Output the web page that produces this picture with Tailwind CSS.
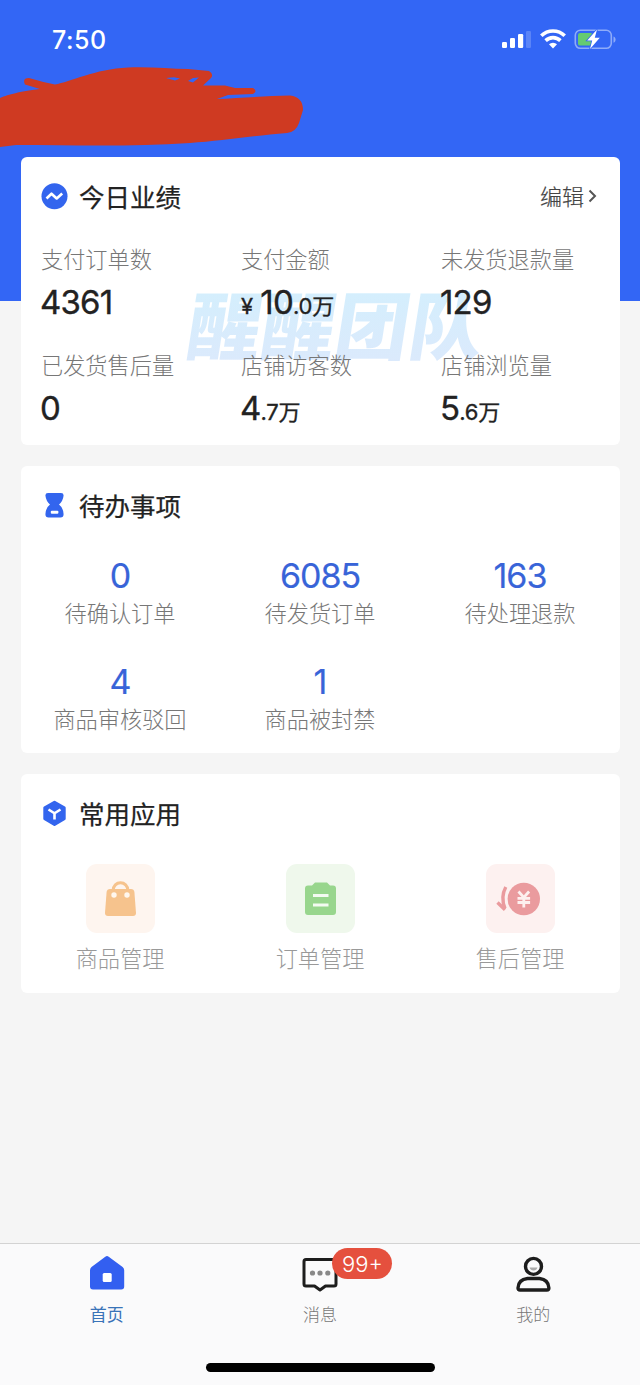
<!DOCTYPE html>
<html lang="zh-CN">
<head>
<meta charset="utf-8">
<title>店铺首页</title>
<script src="https://cdn.jsdelivr.net/npm/@tailwindcss/browser@4"></script>
</head>
<body class="w-[640px] h-[1385px] overflow-hidden font-['Inter','Noto_Sans_CJK_SC',sans-serif]">
<div class="flex flex-col h-[1385px] bg-[linear-gradient(#3366f5_301px,#f5f5f5_301px)]">

  <header class="h-[157px] shrink-0 relative">
    <div class="flex items-center justify-between pl-[52px] pr-[23px] pt-[22px]">
      <span class="text-[25px] leading-[36px] font-medium tracking-[0.5px] text-white">7:50</span>
      <div class="flex items-center">
        <svg class="w-[116px] h-[24px]" viewBox="501 28 116 24">
          <g fill="#fff"><rect x="502" y="42" width="5" height="6" rx="1.2"/><rect x="510" y="38" width="5" height="10" rx="1.2"/><rect x="518" y="34" width="5.2" height="14" rx="1.2"/><rect x="526" y="31" width="5" height="17" rx="1.2" opacity=".2"/></g>
          <g fill="none" stroke="#fff" stroke-width="3.6"><path d="M541.3 35.8a16.6 16.6 0 0 1 23.4 0"/><path d="M545.6 40.6a10.6 10.6 0 0 1 14.8 0"/></g>
          <path d="M549 44.300a5.700 5.700 0 0 1 8 0l-4 4.300z" fill="#fff"/>
          <rect x="575.3" y="30.300" width="36" height="18" rx="5" fill="none" stroke="#8eabf9" stroke-width="1.600"/>
          <path d="M613.500 36.500c2.800 1 2.800 5.200 0 6.200z" fill="#8eabf9"/>
          <rect x="578" y="33" width="14.500" height="12.600" rx="2.200" fill="#65cb70"/>
          <path d="M597 29.500l-9.800 11h5L590 49l9.800-11.200h-5z" fill="#fff" stroke="#3366f5" stroke-width="1.600" paint-order="stroke"/>
        </svg>
      </div>
    </div>
    <svg class="absolute left-0 top-[60px] w-[320px] h-[92px]" viewBox="0 60 320 92">
      <path d="M0 98C10 94 18 92 40 89L25 84.500Q22 78 29 78Q42 82 55 84.500C70 82 95 69 128 67.500C150 66.500 170 69 188 69L209 71Q214 74 211 78L203 85.500L225 85.500L235 88L253 88Q258 91 253 94L228 95L217 99C240 98 266 96 290 95.500Q303 97 303 110L299 123Q296 132 287 133C250 136 220 141 190 143C130 147 70 145 16 145L0 147Z" fill="#cf3a22"/>
      <path d="M166 78l8-.8 6 1.300-5 2zM188 81l5-3 6-.5-6 5z" fill="#3366f5"/>
    </svg>
  </header>

  <main class="flex flex-col gap-[21px] pl-[21px] pr-[20px]">
    <section class="relative isolate h-[288px] rounded-[6px] bg-white px-5 pt-[20px]">
      <div class="absolute -z-10 left-[167px] top-[126px] h-[88px] flex items-center text-[74px] leading-[88px] font-black text-transparent bg-clip-text bg-gradient-to-b from-[#d3effd] to-[#dce9fc] -skew-x-[9deg] whitespace-nowrap">醒醒团队</div>
      <div class="flex items-center h-[40px]">
        <svg class="w-[27px] h-[27px] -mt-[2px]" viewBox="0 0 27 27"><circle cx="13.500" cy="13.200" r="13" fill="#3365ee"/><path d="M5.500 15.500l5-4.800 5.200 4.800 5.500-5" fill="none" stroke="#fff" stroke-width="2.600" stroke-linejoin="round"/></svg>
        <h2 class="ml-[11px] text-[25.500px] leading-[42px] h-[40px] font-normal [-webkit-text-stroke:0.250px_#222] text-[#222]">今日业绩</h2>
        <span class="ml-auto text-[22px] leading-[40px] font-light [-webkit-text-stroke:0.200px_#444] text-[#444]">编辑</span>
        <svg class="ml-[4px] mr-[3px] w-[9px] h-[14px] -mt-[2px]" viewBox="0 0 9 14"><path d="M1.500 1.500L7 7l-5.500 5.500" fill="none" stroke="#555" stroke-width="2"/></svg>
      </div>
      <div class="grid grid-cols-[200px_200px_1fr] mt-[26px] gap-y-[26px] text-[#222]">
        <div class="h-[80px]"><p class="text-[22.200px] leading-[34px] font-light text-[#777] whitespace-nowrap">支付订单数</p><p class="text-[33px] leading-[50px] font-normal [-webkit-text-stroke:0.350px_#222] tracking-[-0.800px] -ml-px">4361</p></div>
        <div class="h-[80px]"><p class="text-[22.200px] leading-[34px] font-light text-[#777] whitespace-nowrap">支付金额</p><p class="text-[33px] leading-[50px] font-normal [-webkit-text-stroke:0.350px_#222] tracking-[-0.800px] whitespace-nowrap"><span class="text-[22px] mr-[8px]">¥</span>10<span class="text-[22px] tracking-[-0.200px]">.0万</span></p></div>
        <div class="h-[80px]"><p class="text-[22.200px] leading-[34px] font-light text-[#777] whitespace-nowrap">未发货退款量</p><p class="text-[33px] leading-[50px] font-normal [-webkit-text-stroke:0.350px_#222] tracking-[-0.800px] -ml-px">129</p></div>
        <div class="h-[80px]"><p class="text-[22.200px] leading-[34px] font-light text-[#777] whitespace-nowrap">已发货售后量</p><p class="text-[33px] leading-[50px] font-normal [-webkit-text-stroke:0.350px_#222] tracking-[-0.800px] -ml-px">0</p></div>
        <div class="h-[80px]"><p class="text-[22.200px] leading-[34px] font-light text-[#777] whitespace-nowrap">店铺访客数</p><p class="text-[33px] leading-[50px] font-normal [-webkit-text-stroke:0.350px_#222] tracking-[-0.800px] -ml-px">4<span class="text-[22px] tracking-[-0.200px]">.7万</span></p></div>
        <div class="h-[80px]"><p class="text-[22.200px] leading-[34px] font-light text-[#777] whitespace-nowrap">店铺浏览量</p><p class="text-[33px] leading-[50px] font-normal [-webkit-text-stroke:0.350px_#222] tracking-[-0.800px] -ml-px">5<span class="text-[22px] tracking-[-0.200px]">.6万</span></p></div>
      </div>
    </section>

    <section class="h-[287px] rounded-[6px] bg-white pt-[20px]">
      <div class="flex items-center h-[40px] px-5">
        <svg class="w-[27px] h-[27px] -mt-[2px]" viewBox="0 0 27 27"><path d="M7 1h13q3 0 2.500 3-.5 5-4.500 8.500 4 3 4.500 9 .5 4-3 4h-12q-3.500 0-3-4 .5-6 4.500-9-4-3.500-4.500-8.500Q4 1 7 1z" fill="#3365ee"/><rect x="9.800" y="18.700" width="7.600" height="3" rx="1" fill="#fff"/></svg>
        <h2 class="ml-[11px] text-[25.500px] leading-[42px] h-[40px] font-normal [-webkit-text-stroke:0.250px_#222] text-[#222]">待办事项</h2>
      </div>
      <div class="grid grid-cols-[200px_200px_200px] -ml-px mt-[27px] gap-y-[24px] text-center">
        <div class="h-[82px]"><p class="text-[34px] leading-[46px] font-normal [-webkit-text-stroke:0.200px_#3864d8] tracking-[-1px] text-[#3864d8]">0</p><p class="text-[22.200px] leading-[34px] font-light text-[#777] -mt-[2px]">待确认订单</p></div>
        <div class="h-[82px]"><p class="text-[34px] leading-[46px] font-normal [-webkit-text-stroke:0.200px_#3864d8] tracking-[-1px] text-[#3864d8]">6085</p><p class="text-[22.200px] leading-[34px] font-light text-[#777] -mt-[2px]">待发货订单</p></div>
        <div class="h-[82px]"><p class="text-[34px] leading-[46px] font-normal [-webkit-text-stroke:0.200px_#3864d8] tracking-[-1px] text-[#3864d8]">163</p><p class="text-[22.200px] leading-[34px] font-light text-[#777] -mt-[2px]">待处理退款</p></div>
        <div class="h-[82px]"><p class="text-[34px] leading-[46px] font-normal [-webkit-text-stroke:0.200px_#3864d8] tracking-[-1px] text-[#3864d8]">4</p><p class="text-[22.200px] leading-[34px] font-light text-[#777] -mt-[2px]">商品审核驳回</p></div>
        <div class="h-[82px]"><p class="text-[34px] leading-[46px] font-normal [-webkit-text-stroke:0.200px_#3864d8] tracking-[-1px] text-[#3864d8]">1</p><p class="text-[22.200px] leading-[34px] font-light text-[#777] -mt-[2px]">商品被封禁</p></div>
      </div>
    </section>

    <section class="h-[219px] rounded-[6px] bg-white pt-[20px]">
      <div class="flex items-center h-[40px] px-5">
        <svg class="w-[27px] h-[27px] -mt-[2px]" viewBox="0 0 27 27"><path d="M13.500 2.200L23.200 7.700V18.800L13.500 24.500 3.800 18.800V7.700z" fill="#3365ee" stroke="#3365ee" stroke-width="3" stroke-linejoin="round"/><path d="M7.500 9.500l6 3.800 6-3.800M13.500 13v6.500" fill="none" stroke="#fff" stroke-width="2.600"/></svg>
        <h2 class="ml-[11px] text-[25.500px] leading-[42px] h-[40px] font-normal [-webkit-text-stroke:0.250px_#222] text-[#222]">常用应用</h2>
      </div>
      <div class="grid grid-cols-[200px_200px_200px] -ml-px mt-[30px] text-center">
        <div class="flex flex-col items-center">
          <svg class="w-[69px] h-[69px]" viewBox="0 0 69 69"><rect width="69" height="69" rx="11" fill="#fef5ef"/><path d="M24 25h21q3 0 3.400 3l1.600 21q0 3-3 3H22q-3 0-3-3l1.600-21q.4-3 3.400-3z" fill="#f6c38d"/><path d="M27 27c0-11 15-11 15 0" fill="none" stroke="#f6c38d" stroke-width="3"/><circle cx="28" cy="31" r="2.700" fill="#fff7ee"/><circle cx="41" cy="31" r="2.700" fill="#fff7ee"/></svg>
          <p class="mt-[9px] text-[22.200px] leading-[34px] font-light text-[#999]">商品管理</p>
        </div>
        <div class="flex flex-col items-center">
          <svg class="w-[69px] h-[69px]" viewBox="0 0 69 69"><rect width="69" height="69" rx="11" fill="#eff8ec"/><path d="M22 21.500h4l3-3h12l3 3h3q3 0 3 3v23.500q0 3-3 3H22q-3 0-3-3V24.500q0-3 3-3z" fill="#98d68d"/><path d="M27 31.500h15.500M27 41h15.500" stroke="#f4fbf2" stroke-width="3.200"/></svg>
          <p class="mt-[9px] text-[22.200px] leading-[34px] font-light text-[#999]">订单管理</p>
        </div>
        <div class="flex flex-col items-center">
          <svg class="w-[69px] h-[69px]" viewBox="0 0 69 69"><rect width="69" height="69" rx="11" fill="#fdf1f0"/><circle cx="37.800" cy="35" r="16.200" fill="#ea9b9e"/><path d="M32.500 27.500l5.300 6 5.300-6M31.500 34.300h12.600M31.500 38.500h12.600M37.800 33v10.500" fill="none" stroke="#fdf0ef" stroke-width="2.800"/><path d="M19.800 23q-5.500 10-.8 21.500M11.500 38.500l7.500 7.300" fill="none" stroke="#ea9b9e" stroke-width="3.400"/></svg>
          <p class="mt-[9px] text-[22.200px] leading-[34px] font-light text-[#999]">售后管理</p>
        </div>
      </div>
    </section>
  </main>

  <footer class="mt-auto h-[142px] shrink-0 border-t border-[#d3d3d3] bg-[#fafafb] flex flex-col">
    <nav class="grid grid-cols-3 text-center text-[17px] leading-[26px]">
      <div class="flex flex-col items-center pt-[11px]">
        <svg class="w-[36px] h-[36px]" viewBox="0 0 36 36"><path d="M16.300 1.700q1.700-1.300 3.400 0L33.600 12q1.600 1.300 1.600 3.200V31.500q0 3-3 3H4q-3 0-3-3V15.200Q1 13.300 2.500 12z" fill="#335ff0"/><rect x="13.700" y="18" width="9" height="9" rx="1.500" fill="#fff"/></svg>
        <p class="mt-[11px] text-[#3973b8]">首页</p>
      </div>
      <div class="flex flex-col items-center pt-[11px] relative">
        <svg class="w-[36px] h-[38px]" viewBox="0 0 36 38"><path d="M4 4.500h28q2 0 2 2V29q0 2-2 2h-8.500L18 35l-5.500-4H4q-2 0-2-2V6.500q0-2 2-2z" fill="none" stroke="#1d1d1d" stroke-width="3" stroke-linejoin="round"/><g fill="#888"><circle cx="10.500" cy="18" r="2.600"/><circle cx="18" cy="18" r="2.600"/><circle cx="25.800" cy="18" r="2.600"/></g></svg>
        <span class="absolute left-[119px] top-[4px] w-[60px] h-[31px] rounded-full bg-[#e5503e] text-white text-[22px] leading-[32px] font-light">99+</span>
        <p class="mt-[9px] font-light text-[#777]">消息</p>
      </div>
      <div class="flex flex-col items-center pt-[11px]">
        <svg class="w-[36px] h-[38px]" viewBox="0 0 36 38"><g fill="none" stroke="#1d1d1d" stroke-width="3.400"><circle cx="18.500" cy="11.400" r="8"/><path d="M12.500 23.500h12q9 1 9.400 9.500 0 2-2 2H5q-2 0-2-2Q3.300 24.500 12.500 23.500z"/></g><path d="M14.500 12.500h8q-1 3-4 3t-4-3z" fill="#aaa"/></svg>
        <p class="mt-[9px] font-light text-[#777]">我的</p>
      </div>
    </nav>
    <div class="mt-auto mb-[13px] mx-auto w-[229px] h-[9px] rounded-full bg-black"></div>
  </footer>
</div>
</body>
</html>
